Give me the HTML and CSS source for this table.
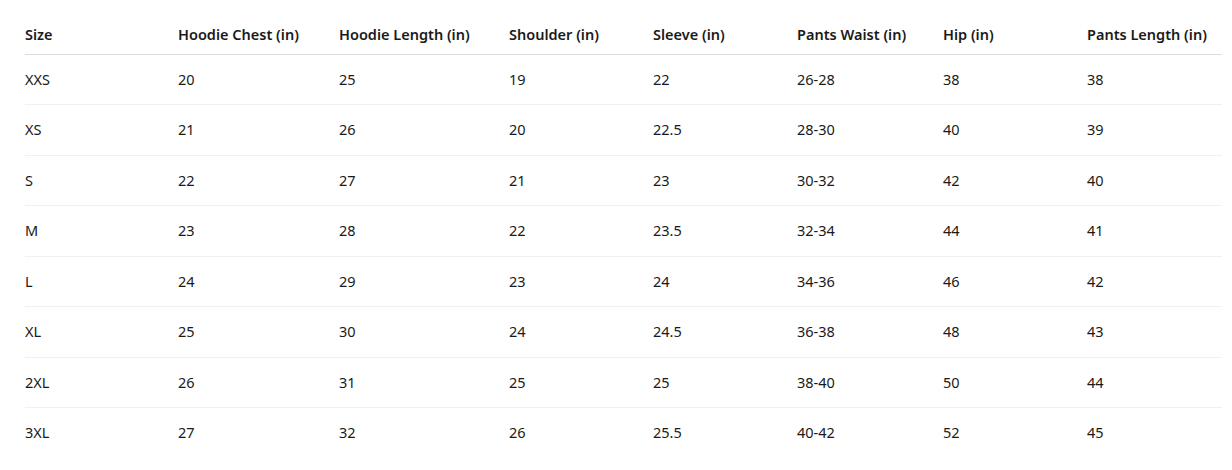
FILE: index.html
```html
<!DOCTYPE html>
<html lang="en">
<head>
<meta charset="utf-8">
<title>Size Chart</title>
<link rel="stylesheet" href="styles.css">
</head>
<body>
<div class="wrap">
<table class="size-table">
<thead>
<tr><th>Size</th><th>Hoodie Chest (in)</th><th>Hoodie Length (in)</th><th>Shoulder (in)</th><th>Sleeve (in)</th><th>Pants Waist (in)</th><th>Hip (in)</th><th>Pants Length (in)</th></tr>
</thead>
<tbody>
<tr><td>XXS</td><td>20</td><td>25</td><td>19</td><td>22</td><td>26-28</td><td>38</td><td>38</td></tr>
<tr><td>XS</td><td>21</td><td>26</td><td>20</td><td>22.5</td><td>28-30</td><td>40</td><td>39</td></tr>
<tr><td>S</td><td>22</td><td>27</td><td>21</td><td>23</td><td>30-32</td><td>42</td><td>40</td></tr>
<tr><td>M</td><td>23</td><td>28</td><td>22</td><td>23.5</td><td>32-34</td><td>44</td><td>41</td></tr>
<tr><td>L</td><td>24</td><td>29</td><td>23</td><td>24</td><td>34-36</td><td>46</td><td>42</td></tr>
<tr><td>XL</td><td>25</td><td>30</td><td>24</td><td>24.5</td><td>36-38</td><td>48</td><td>43</td></tr>
<tr><td>2XL</td><td>26</td><td>31</td><td>25</td><td>25</td><td>38-40</td><td>50</td><td>44</td></tr>
<tr><td>3XL</td><td>27</td><td>32</td><td>26</td><td>25.5</td><td>40-42</td><td>52</td><td>45</td></tr>
</tbody>
</table>
</div>
</body>
</html>
```
FILE: styles.css
```css
html, body {
  margin: 0;
  padding: 0;
  background: #fff;
}
body {
  font-family: "Noto Sans", "Open Sans", sans-serif;
  font-size: 14.5px;
  color: #1a1a1a;
}
.wrap {
  padding: 0 10px 0 25px;
}
.size-table {
  width: 1197px;
  border-collapse: collapse;
  table-layout: fixed;
}
.size-table th,
.size-table td {
  text-align: left;
  line-height: 25.5px;
  white-space: nowrap;
}
.size-table th {
  padding: 22px 0 6px;
  font-weight: 600;
  border-bottom: 1px solid #dcdcdc;
}
.size-table td {
  padding: 12px 0;
  border-bottom: 1px solid #f0f0f0;
}
.size-table tbody tr:last-child td {
  border-bottom: none;
}
.size-table th:nth-child(1) { width: 153px; }
.size-table th:nth-child(2) { width: 161px; }
.size-table th:nth-child(3) { width: 170px; }
.size-table th:nth-child(4) { width: 144px; }
.size-table th:nth-child(5) { width: 144px; }
.size-table th:nth-child(6) { width: 146px; }
.size-table th:nth-child(7) { width: 144px; }
.size-table th:nth-child(8) { width: 135px; }
```
